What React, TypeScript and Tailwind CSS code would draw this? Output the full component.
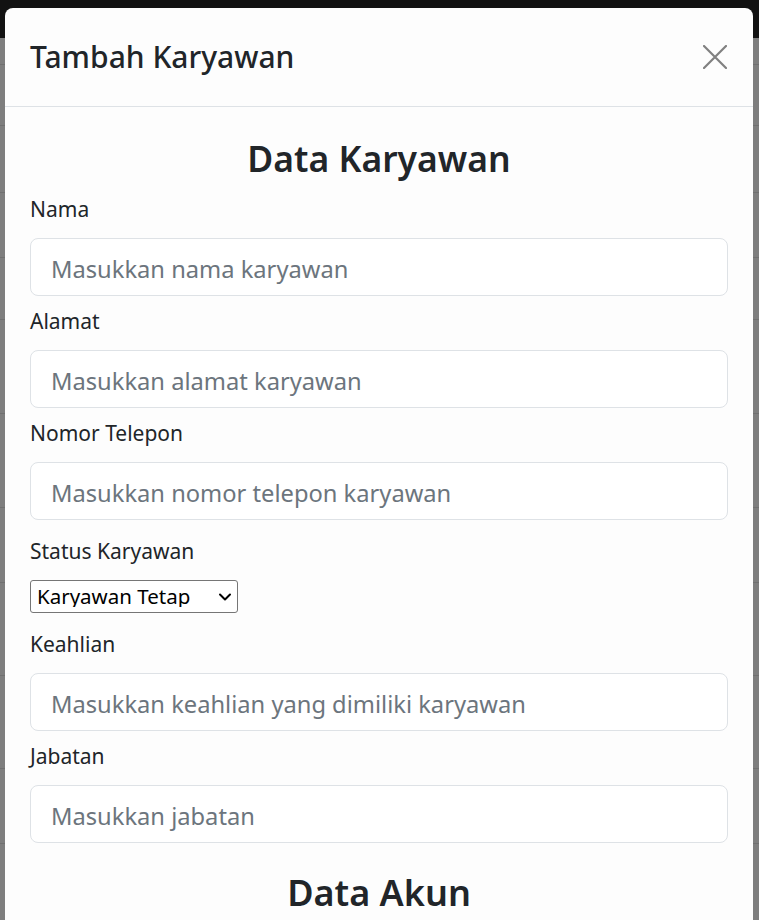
import { ChevronDown } from 'lucide-react';

const rowLines = [64, 125, 192, 257, 319, 413, 507, 582, 675, 768, 843];

function Field({ label, placeholder, first }: { label: string; placeholder: string; first?: boolean }) {
  return (
    <div className={first ? 'mt-[12px]' : 'mt-[10px]'}>
      <label className="block text-[21px] leading-[30px] text-[#212529]">{label}</label>
      <input
        type="text"
        placeholder={placeholder}
        className="mt-[14px] block h-[58px] w-full rounded-[8px] border border-[#dee2e6] bg-white px-[20px] pt-[3px] text-[23.7px] text-[#212529] outline-none placeholder:text-[#6c757d]"
      />
    </div>
  );
}

export default function App() {
  return (
    <div className="relative h-[920px] w-full overflow-hidden bg-[#7e7e7e] font-['Noto_Sans',sans-serif]">
      {/* page behind the backdrop */}
      <div className="h-[38px] bg-[#121212]" />
      {rowLines.map((y) => (
        <div key={y} className="absolute left-0 right-0 h-px bg-[#707070]" style={{ top: y }} />
      ))}

      <div className="absolute left-[5px] top-[8px] w-[748px] rounded-t-[8px] bg-[#fdfdfd] pb-10">
        <div className="flex h-[99px] items-center justify-between border-b border-[#dee2e6] pl-[25px] pr-[26px]">
          <h5 className="text-[30px] font-medium leading-[1.2] text-[#212529]">Tambah Karyawan</h5>
          <button type="button" className="flex h-[24px] w-[24px] items-center justify-center">
            <svg width="24" height="24" viewBox="0 0 24 24" fill="none" stroke="#808080" strokeWidth="2.2" strokeLinecap="round">
              <path d="M1 1 L23 23 M23 1 L1 23" />
            </svg>
          </button>
        </div>

        <div className="px-[25px] pt-[27px]">
          <h2 className="text-center text-[35.5px] font-semibold leading-[48px] text-[#212529]">Data Karyawan</h2>
          <Field first label="Nama" placeholder="Masukkan nama karyawan" />
          <Field label="Alamat" placeholder="Masukkan alamat karyawan" />
          <Field label="Nomor Telepon" placeholder="Masukkan nomor telepon karyawan" />

          <div className="mt-[16px]">
            <label className="block text-[21px] leading-[30px] text-[#212529]">Status Karyawan</label>
            <div className="relative mt-[14px] w-[208px]">
              <select className="block h-[33px] w-full appearance-none rounded-[3px] border border-[#767676] bg-white pl-[6px] text-[20.5px] leading-none text-black outline-none">
                <option>Karyawan Tetap</option>
                <option>Karyawan Kontrak</option>
              </select>
              <ChevronDown
                size={20}
                strokeWidth={2.4}
                className="pointer-events-none absolute right-[3px] top-[7px] text-black"
              />
            </div>
          </div>

          <div className="mt-[16px]">
            <label className="block text-[21px] leading-[30px] text-[#212529]">Keahlian</label>
            <input
              type="text"
              placeholder="Masukkan keahlian yang dimiliki karyawan"
              className="mt-[14px] block h-[58px] w-full rounded-[8px] border border-[#dee2e6] bg-white px-[20px] pt-[3px] text-[23.7px] text-[#212529] outline-none placeholder:text-[#6c757d]"
            />
          </div>
          <Field label="Jabatan" placeholder="Masukkan jabatan" />

          <h2 className="mt-[26px] text-center text-[36px] font-semibold leading-[48px] text-[#212529]">Data Akun</h2>
        </div>
      </div>
    </div>
  );
}
